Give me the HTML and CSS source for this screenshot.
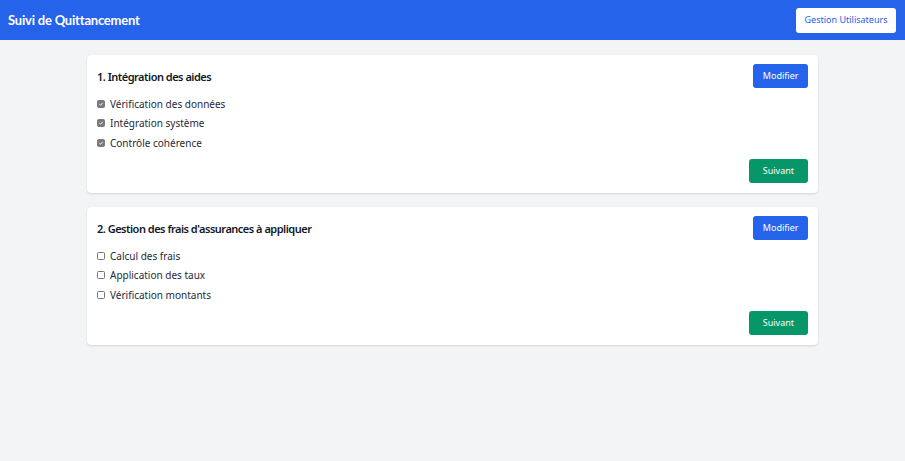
FILE: index.html
```html
<!DOCTYPE html>
<html lang="fr">
<head>
<meta charset="utf-8">
<title>Suivi de Quittancement</title>
<link rel="stylesheet" href="styles.css">
</head>
<body>
<header class="topbar">
  <h1 class="brand">Suivi de Quittancement</h1>
  <button class="btn btn-light">Gestion Utilisateurs</button>
</header>
<main class="main">
  <div class="container">
    <section class="card">
      <div class="card-head">
        <h2 class="card-title">1. Intégration des aides</h2>
        <button class="btn btn-blue">Modifier</button>
      </div>
      <ul class="checks">
        <li class="check-item"><span class="box checked"><svg viewBox="0 0 10 10"><path d="M2.3 5.2 L4.2 7 L7.8 3.1" fill="none" stroke="#fff" stroke-width="1.6"/></svg></span>Vérification des données</li>
        <li class="check-item"><span class="box checked"><svg viewBox="0 0 10 10"><path d="M2.3 5.2 L4.2 7 L7.8 3.1" fill="none" stroke="#fff" stroke-width="1.6"/></svg></span>Intégration système</li>
        <li class="check-item"><span class="box checked"><svg viewBox="0 0 10 10"><path d="M2.3 5.2 L4.2 7 L7.8 3.1" fill="none" stroke="#fff" stroke-width="1.6"/></svg></span>Contrôle cohérence</li>
      </ul>
      <div class="card-foot">
        <button class="btn btn-green">Suivant</button>
      </div>
    </section>
    <section class="card">
      <div class="card-head">
        <h2 class="card-title">2. Gestion des frais d'assurances à appliquer</h2>
        <button class="btn btn-blue">Modifier</button>
      </div>
      <ul class="checks">
        <li class="check-item"><span class="box"></span>Calcul des frais</li>
        <li class="check-item"><span class="box"></span>Application des taux</li>
        <li class="check-item"><span class="box"></span>Vérification montants</li>
      </ul>
      <div class="card-foot">
        <button class="btn btn-green">Suivant</button>
      </div>
    </section>
  </div>
</main>
</body>
</html>
```
FILE: styles.css
```css
* { box-sizing: border-box; }
html, body {
  margin: 0;
  padding: 0;
}
body {
  background: #f3f4f6;
  font-family: "Noto Sans", "Open Sans", sans-serif;
  color: #1f2937;
  min-height: 461px;
}
.topbar {
  height: 40px;
  background: #2563eb;
  display: flex;
  align-items: center;
  justify-content: space-between;
  padding: 0 9px 0 8px;
}
.brand {
  margin: 0;
  color: #fff;
  font-family: Lato, "Noto Sans", sans-serif;
  font-size: 13px;
  font-weight: 700;
  letter-spacing: -0.2px;
}
.btn {
  font-family: inherit;
  border: none;
  border-radius: 3px;
  height: 24px;
  padding: 0 9.5px;
  font-size: 9px;
  cursor: pointer;
  line-height: 24px;
}
.btn-light {
  background: #fff;
  color: #2563eb;
  height: 25px;
  padding: 0 8.5px;
}
.btn-blue {
  background: #2563eb;
  color: #fff;
}
.btn-green {
  background: #059669;
  color: #fff;
  padding: 0 14px;
}
.main {
  padding-top: 15px;
}
.container {
  width: 731px;
  margin: 0 auto;
  display: flex;
  flex-direction: column;
  gap: 14px;
}
.card {
  background: #fff;
  border-radius: 4px;
  box-shadow: 0 1px 2px rgba(0,0,0,0.12), 0 0 1px rgba(0,0,0,0.08);
  padding: 9px 10px 10px 10px;
}
.card-head {
  display: flex;
  align-items: center;
  justify-content: space-between;
  height: 24px;
}
.card-title {
  margin: 0;
  font-size: 11px;
  font-weight: 600;
  letter-spacing: -0.5px;
  color: #111827;
}
.checks {
  list-style: none;
  margin: 6px 0 0 0;
  padding: 0;
}
.check-item {
  height: 19.5px;
  display: flex;
  align-items: center;
  gap: 5px;
  font-size: 10px;
  color: #1f2937;
}
.box {
  width: 8px;
  height: 8px;
  border: 1px solid #767676;
  border-radius: 1.5px;
  background: #fff;
  display: inline-flex;
  flex: none;
}
.box.checked {
  background: #7a7a7a;
  border-color: #7a7a7a;
}
.box svg {
  width: 100%;
  height: 100%;
}
.card-foot {
  display: flex;
  justify-content: flex-end;
  margin-top: 6.5px;
}
```
